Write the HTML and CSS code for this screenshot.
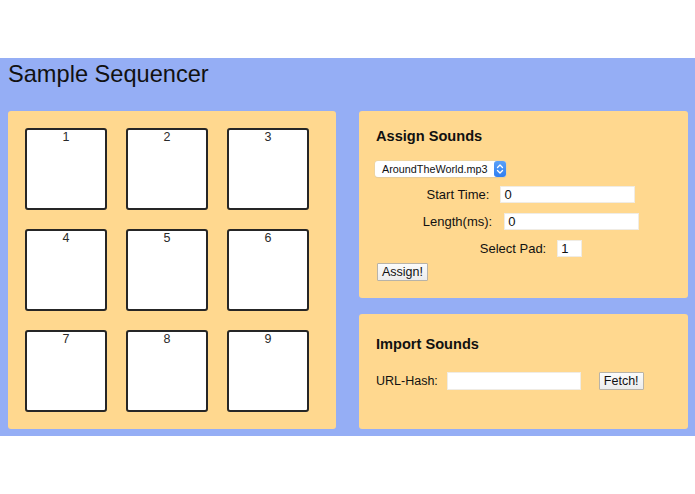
FILE: index.html
```html
<!DOCTYPE html>
<html>
<head>
<meta charset="utf-8">
<title>Sample Sequencer</title>
<link rel="stylesheet" href="styles.css">
</head>
<body>
<div class="app">
  <h1 class="title">Sample Sequencer</h1>
  <div class="main">
    <div class="panel pads">
      <div class="pad">1</div>
      <div class="pad">2</div>
      <div class="pad">3</div>
      <div class="pad">4</div>
      <div class="pad">5</div>
      <div class="pad">6</div>
      <div class="pad">7</div>
      <div class="pad">8</div>
      <div class="pad">9</div>
    </div>
    <div class="side">
      <div class="panel assign">
        <h3 class="heading">Assign Sounds</h3>
        <div class="select">
          <span class="select-text">AroundTheWorld.mp3</span>
          <span class="stepper">
            <svg width="12" height="16" viewBox="0 0 12 16">
              <path d="M3.5 6.5 L6 4 L8.5 6.5" fill="none" stroke="#fff" stroke-width="1.3" stroke-linecap="round" stroke-linejoin="round"/>
              <path d="M3.5 9.5 L6 12 L8.5 9.5" fill="none" stroke="#fff" stroke-width="1.3" stroke-linecap="round" stroke-linejoin="round"/>
            </svg>
          </span>
        </div>
        <div class="row">
          <span class="label">Start Time:</span>
          <span class="input wide">0</span>
        </div>
        <div class="row row-len">
          <span class="label">Length(ms):</span>
          <span class="input wide">0</span>
        </div>
        <div class="row">
          <span class="label">Select Pad:</span>
          <span class="input narrow">1</span>
        </div>
        <button class="btn">Assign!</button>
      </div>
      <div class="panel import">
        <h3 class="heading">Import Sounds</h3>
        <div class="url-row">
          <span class="label url-label">URL-Hash:</span>
          <span class="input url"></span>
          <button class="btn fetch">Fetch!</button>
        </div>
      </div>
    </div>
  </div>
</div>
</body>
</html>
```

FILE: styles.css
```css
html, body {
  margin: 0;
  padding: 0;
  background: #ffffff;
}
body {
  font-family: "Liberation Sans", Arial, Helvetica, sans-serif;
  color: #111;
}
.app {
  margin-top: 58px;
  background: #95aef5;
  padding: 3px 7px 7px 8px;
}
.title {
  margin: 0;
  font-size: 23.6px;
  font-weight: normal;
  line-height: 27px;
  color: #111;
}
.main {
  display: flex;
  gap: 23px;
  margin-top: 23px;
}
.panel {
  background: #ffd88f;
  border-radius: 3px;
  box-sizing: border-box;
}
.pads {
  width: 328px;
  height: 318px;
  padding: 17px 27px 17px 17px;
  display: grid;
  grid-template-columns: repeat(3, 82px);
  grid-template-rows: repeat(3, 82px);
  gap: 19px;
}
.pad {
  box-sizing: border-box;
  background: #fff;
  border: 2px solid #262626;
  border-radius: 3px;
  text-align: center;
  font-size: 12.5px;
  line-height: 14px;
  color: #2a2a2a;
}
.side {
  width: 329px;
  display: flex;
  flex-direction: column;
  gap: 16px;
}
.assign {
  height: 187px;
  padding: 17px 17px 0 17px;
}
.import {
  height: 115px;
  padding: 22px 17px 0 17px;
}
.heading {
  margin: 0 0 14px 0;
  font-size: 14.6px;
  font-weight: bold;
  line-height: 17px;
  color: #111;
}
.select {
  display: inline-flex;
  align-items: stretch;
  width: 131px;
  height: 16px;
  margin-left: -1px;
  background: #fff;
  border-radius: 3px;
  box-shadow: 0 0 0 0.5px #e0d2b4, 0 1px 1px rgba(0,0,0,0.08);
  box-sizing: border-box;
}
.select-text {
  flex: 1;
  font-size: 10.8px;
  line-height: 16px;
  padding-left: 7px;
  color: #111;
}
.stepper {
  width: 12px;
  background: linear-gradient(#5aa0f8, #2f7ef0);
  border-radius: 3px;
  display: flex;
}
.row {
  display: flex;
  justify-content: center;
  align-items: center;
  gap: 11px;
  height: 27px;
  padding-left: 15px;
  font-size: 13px;
}
.select + .row {
  margin-top: 4px;
}
.row-len {
  gap: 12px;
}
.label {
  font-size: 13px;
  color: #111;
}
.url-label {
  font-size: 12.5px;
}
.input {
  display: block;
  box-sizing: border-box;
  height: 17px;
  background: #fff;
  border: 1px solid #f0ece4;
  font-size: 13px;
  line-height: 15px;
  padding-left: 3px;
  color: #111;
}
.wide {
  width: 135px;
}
.narrow {
  width: 25px;
}
.btn {
  display: block;
  margin: 1px 0 0 1px;
  height: 18px;
  padding: 0 4px;
  font-family: "Liberation Sans", Arial, sans-serif;
  font-size: 12.5px;
  line-height: 16px;
  color: #111;
  background: linear-gradient(#fbfbfb, #ececec);
  border: 1px solid #b8b3a8;
  border-radius: 1px;
}
.url-row {
  display: flex;
  align-items: center;
  margin-top: 19px;
  height: 18px;
}
.url {
  width: 134px;
  height: 18px;
  margin-left: 9px;
}
.fetch {
  margin: 0 0 0 18px;
}
```
